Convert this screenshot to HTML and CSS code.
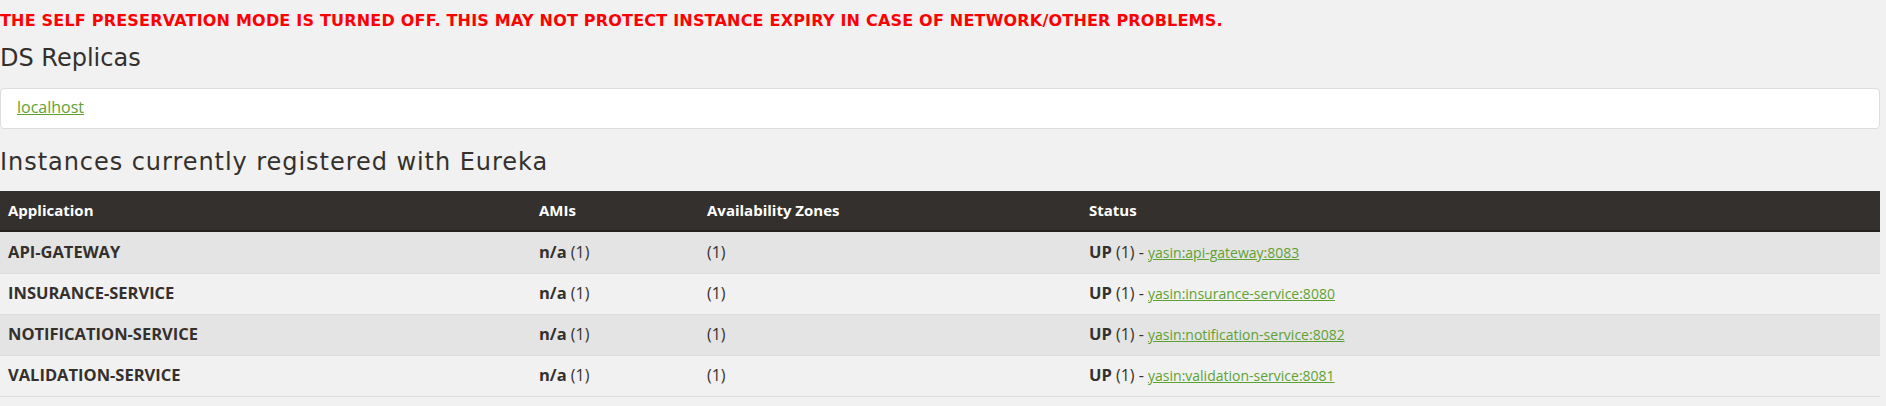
FILE: index.html
```html
<!DOCTYPE html>
<html lang="en">
<head>
<meta charset="utf-8">
<title>Eureka</title>
<link rel="stylesheet" href="styles.css">
</head>
<body>
<div class="page">
  <h4 class="warning">THE SELF PRESERVATION MODE IS TURNED OFF. THIS MAY NOT PROTECT INSTANCE EXPIRY IN CASE OF NETWORK/OTHER PROBLEMS.</h4>
  <h1 class="title title-replicas">DS Replicas</h1>
  <ul class="list-group">
    <li class="list-group-item"><a href="#">localhost</a></li>
  </ul>
  <h1 class="title title-instances">Instances currently registered with Eureka</h1>
  <table class="table">
    <colgroup>
      <col class="c-app">
      <col class="c-ami">
      <col class="c-zone">
      <col class="c-status">
    </colgroup>
    <thead>
      <tr><th>Application</th><th>AMIs</th><th>Availability Zones</th><th>Status</th></tr>
    </thead>
    <tbody>
      <tr><td><b>API-GATEWAY</b></td><td><b>n/a</b> (1)</td><td>(1)</td><td><b>UP</b> (1) - <a href="#">yasin:api-gateway:8083</a></td></tr>
      <tr><td><b>INSURANCE-SERVICE</b></td><td><b>n/a</b> (1)</td><td>(1)</td><td><b>UP</b> (1) - <a href="#">yasin:insurance-service:8080</a></td></tr>
      <tr><td><b>NOTIFICATION-SERVICE</b></td><td><b>n/a</b> (1)</td><td>(1)</td><td><b>UP</b> (1) - <a href="#">yasin:notification-service:8082</a></td></tr>
      <tr><td><b>VALIDATION-SERVICE</b></td><td><b>n/a</b> (1)</td><td>(1)</td><td><b>UP</b> (1) - <a href="#">yasin:validation-service:8081</a></td></tr>
    </tbody>
  </table>
</div>
</body>
</html>
```
FILE: styles.css
```css
html, body {
  margin: 0;
  padding: 0;
  background: #f1f1f1;
}
body {
  font-family: "Open Sans", "DejaVu Sans", sans-serif;
  font-size: 14px;
  color: #34302d;
}
.page {
  width: 1880px;
  padding-top: 10px;
}
.warning {
  margin: 0;
  font-family: "DejaVu Sans", sans-serif;
  font-size: 16px;
  line-height: 22px;
  font-weight: bold;
  color: #ff0000;
  letter-spacing: 0.2px;
}
.title {
  margin: 11px 0 0;
  font-family: "DejaVu Sans", sans-serif;
  font-size: 24px;
  line-height: 30px;
  font-weight: normal;
  color: #34302d;
}
.title-instances {
  margin-top: 18px;
  letter-spacing: 0.95px;
}
.list-group {
  list-style: none;
  margin: 15px 0 0;
  padding: 0;
}
.list-group-item {
  background: #fff;
  border: 1px solid #dddddd;
  border-radius: 4px;
  padding: 8px 16px 11px;
  line-height: 20px;
  font-size: 16px;
}
a {
  color: #5fa134;
  text-decoration: underline;
}
.table {
  margin-top: 14px;
  width: 100%;
  border-collapse: collapse;
  border-bottom: 1px solid #dddddd;
}
.c-app { width: 531px; }
.c-ami { width: 168px; }
.c-zone { width: 382px; }
.table th {
  background: #34302d;
  color: #fff;
  text-align: left;
  font-size: 15px;
  font-weight: 700;
  padding: 9px 8px;
  line-height: 21px;
  border-bottom: 2px solid #24211f;
}
.table td {
  padding: 9px 8px 11px;
  line-height: 20px;
  font-size: 16px;
  border-top: 1px solid #dddddd;
}
.table td a {
  font-size: 14px;
  line-height: 0;
}
.table tbody tr:first-child td {
  border-top: 0;
  padding-top: 10px;
}
.table tbody tr:nth-child(odd) td {
  background: #e4e4e4;
}
.table b {
  font-size: 16.5px;
  font-weight: 700;
  line-height: 0;
}
```
